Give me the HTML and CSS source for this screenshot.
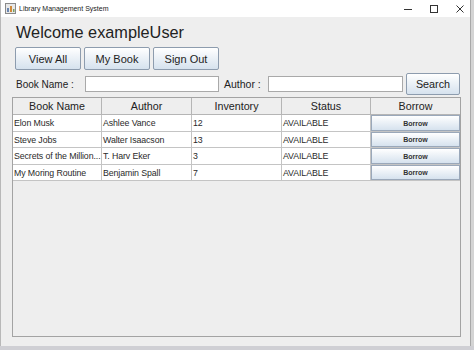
FILE: index.html
```html
<!DOCTYPE html>
<html>
<head>
<meta charset="utf-8">
<link rel="stylesheet" href="styles.css">
</head>
<body>
<div class="screen">
  <div class="window">
    <div class="titlebar">
      <div class="title-left">
        <svg class="app-icon" width="11" height="11" viewBox="0 0 11 11">
          <rect x="0.5" y="0.5" width="10" height="10" fill="#e8e8e8" stroke="#8a8a8a"/>
          <rect x="2" y="5" width="2" height="4" fill="#6a86b0"/>
          <rect x="5" y="3" width="2" height="6" fill="#d08a3a"/>
          <rect x="8" y="6" width="1.5" height="3" fill="#7aa060"/>
        </svg>
        <span class="title-text">Library Management System</span>
      </div>
      <div class="controls">
        <svg class="ctl" width="10" height="10" viewBox="0 0 10 10"><line x1="1" y1="5.5" x2="9" y2="5.5" stroke="#333" stroke-width="1"/></svg>
        <svg class="ctl" width="10" height="10" viewBox="0 0 10 10"><rect x="1.5" y="1.5" width="7" height="7" fill="none" stroke="#333" stroke-width="1"/></svg>
        <svg class="ctl" width="10" height="10" viewBox="0 0 10 10"><path d="M1.5 1.5 L8.5 8.5 M8.5 1.5 L1.5 8.5" stroke="#333" stroke-width="1"/></svg>
      </div>
    </div>
    <div class="content">
      <h1 class="welcome">Welcome exampleUser</h1>
      <div class="nav">
        <button class="btn nav-btn">View All</button>
        <button class="btn nav-btn">My Book</button>
        <button class="btn nav-btn">Sign Out</button>
      </div>
      <div class="search-row">
        <label class="lbl lbl-book">Book Name :</label>
        <input class="field field-book" type="text">
        <label class="lbl lbl-author">Author :</label>
        <input class="field field-author" type="text">
        <button class="btn search-btn">Search</button>
      </div>
      <div class="scrollpane">
        <div class="grid">
          <div class="th">Book Name</div>
          <div class="th">Author</div>
          <div class="th">Inventory</div>
          <div class="th">Status</div>
          <div class="th last">Borrow</div>

          <div class="td">Elon Musk</div>
          <div class="td">Ashlee Vance</div>
          <div class="td">12</div>
          <div class="td">AVAILABLE</div>
          <div class="td cellbtn"><button class="btn mini">Borrow</button></div>

          <div class="td">Steve Jobs</div>
          <div class="td">Walter Isaacson</div>
          <div class="td">13</div>
          <div class="td">AVAILABLE</div>
          <div class="td cellbtn"><button class="btn mini">Borrow</button></div>

          <div class="td">Secrets of the Million...</div>
          <div class="td">T. Harv Eker</div>
          <div class="td">3</div>
          <div class="td">AVAILABLE</div>
          <div class="td cellbtn"><button class="btn mini">Borrow</button></div>

          <div class="td">My Moring Routine</div>
          <div class="td">Benjamin Spall</div>
          <div class="td">7</div>
          <div class="td">AVAILABLE</div>
          <div class="td cellbtn"><button class="btn mini">Borrow</button></div>
        </div>
      </div>
    </div>
  </div>
  <div class="taskbar"></div>
</div>
</body>
</html>
```
FILE: styles.css
```css
html, body {
  margin: 0;
  padding: 0;
  background: #d4d4d4;
}
.screen {
  width: 474px;
  height: 350px;
  display: flex;
  flex-direction: column;
  overflow: hidden;
  font-family: "Liberation Sans", Arial, sans-serif;
}
.window {
  width: 471px;
  height: 346px;
  border-left: 1px solid #b8b8b8;
  border-right: 1px solid #a8a8a8;
  box-sizing: border-box;
  background: #eeeeee;
  display: flex;
  flex-direction: column;
}
.taskbar {
  flex: 1;
  background: #cfcfd4;
}
.titlebar {
  height: 17px;
  background: #ffffff;
  display: flex;
  align-items: center;
  justify-content: space-between;
  flex-shrink: 0;
}
.title-left {
  display: flex;
  align-items: center;
  padding-left: 4px;
  gap: 3px;
}
.title-text {
  font-family: "Liberation Sans", Arial, sans-serif;
  font-size: 7px;
  color: #222;
}
.controls {
  display: flex;
  gap: 16px;
  padding-right: 5px;
}
.ctl { display: block; }
.content {
  flex: 1;
  padding: 0 8px 9px 11px;
  display: flex;
  flex-direction: column;
}
.welcome {
  margin: 5px 0 0 4px;
  font-weight: normal;
  font-size: 16.3px;
  line-height: 20px;
  color: #222;
  height: 24px;
}
.btn {
  font-family: "Liberation Sans", Arial, sans-serif;
  background: linear-gradient(#ffffff 0%, #eef3f8 40%, #d6e2ee 100%);
  border: 1px solid #8d9cae;
  border-radius: 2px;
  color: #222;
  padding: 0;
  margin: 0;
}
.nav {
  display: flex;
  gap: 3px;
  margin-left: 3px;
  margin-top: 1px;
}
.nav-btn {
  width: 66px;
  height: 23px;
  font-size: 11px;
}
.search-row {
  display: flex;
  align-items: center;
  margin-top: 3px;
  margin-left: 4px;
  height: 22px;
}
.lbl {
  font-size: 10px;
  color: #222;
}
.lbl-book { width: 69px; }
.lbl-author { width: 44px; margin-left: 5px; font-size: 10.5px; }
.field {
  height: 16px;
  box-sizing: border-box;
  border: 1px solid #a9a9a9;
  background: #fff;
  margin: 0;
  padding: 0;
}
.field-book { width: 134px; }
.field-author { width: 135px; }
.search-btn {
  width: 54px;
  height: 22px;
  font-size: 10.8px;
  margin-left: 3px;
}
.scrollpane {
  margin-top: 2px;
  width: 449px;
  flex: 1;
  border: 1px solid #a3a3a3;
  box-sizing: border-box;
  background: #eeeeee;
}
.grid {
  display: grid;
  grid-template-columns: 89px 90px 90px 89px 89px;
  grid-template-rows: 17px 17px 16px 17px 16px;
}
.th {
  font-size: 10.7px;
  color: #222;
  text-align: center;
  border-right: 1px solid #b5b5b5;
  border-bottom: 1px solid #b5b5b5;
  line-height: 16px;
  background: #eeeeee;
}
.th.last { border-right: none; }
.td {
  font-size: 8.8px;
  letter-spacing: -0.1px;
  color: #2a2a2a;
  background: #ffffff;
  border-right: 1px solid #c4c4c4;
  border-bottom: 1px solid #c4c4c4;
  line-height: 16px;
  padding-left: 1px;
  white-space: nowrap;
  overflow: hidden;
}
.cellbtn {
  padding: 0;
  border-right: none;
  display: flex;
  background: #ffffff;
}
.mini {
  width: 89px;
  height: 100%;
  font-size: 7px;
  font-weight: bold;
  letter-spacing: 0;
  color: #333;
  border-radius: 0;
  border-color: #9aa8ba;
}
```
